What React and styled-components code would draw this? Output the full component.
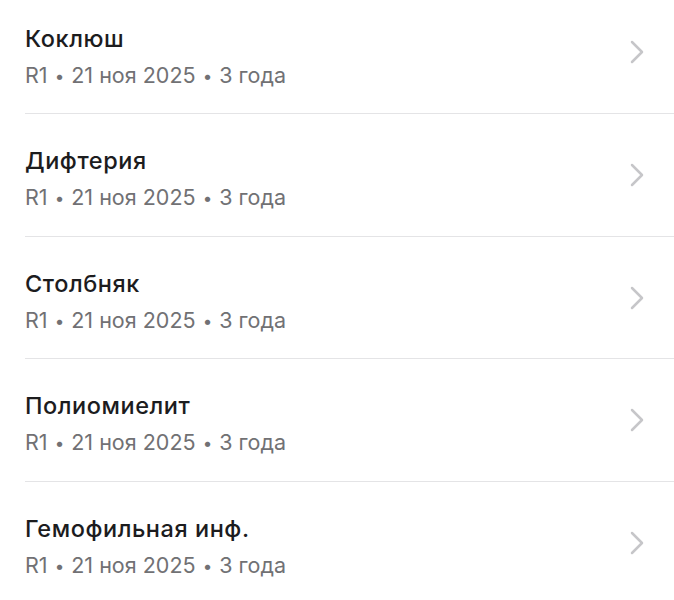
import styled, { createGlobalStyle } from "styled-components";

const GlobalStyle = createGlobalStyle`
  body {
    margin: 0;
    background: #ffffff;
    font-family: Inter, "Noto Sans", sans-serif;
    -webkit-font-smoothing: antialiased;
  }
`;

const vaccines = [
  { name: "Коклюш", round: "R1", date: "21 ноя 2025", age: "3 года" },
  { name: "Дифтерия", round: "R1", date: "21 ноя 2025", age: "3 года" },
  { name: "Столбняк", round: "R1", date: "21 ноя 2025", age: "3 года" },
  { name: "Полиомиелит", round: "R1", date: "21 ноя 2025", age: "3 года" },
  { name: "Гемофильная инф.", round: "R1", date: "21 ноя 2025", age: "3 года" },
];

const Chevron = () => (
  <svg width="16" height="26" viewBox="0 0 16 26" fill="none">
    <path
      d="M3 3 L13 13 L3 23"
      stroke="#c6c6c9"
      strokeWidth="2.5"
      strokeLinecap="round"
      strokeLinejoin="round"
    />
  </svg>
);

const App = () => {
  return (
    <>
      <GlobalStyle />
      <S.List>
        {vaccines.map((v, i) => (
          <S.Row key={i}>
            <S.Inner last={i === vaccines.length - 1}>
              <S.Texts>
                <S.Title>{v.name}</S.Title>
                <S.Meta>
                  {v.round} <S.Dot>•</S.Dot> {v.date} <S.Dot>•</S.Dot> {v.age}
                </S.Meta>
              </S.Texts>
              <Chevron />
            </S.Inner>
          </S.Row>
        ))}
      </S.List>
    </>
  );
};
export default App;

const List = styled.div`
  margin-top: -8.5px;
  background: #ffffff;
`;

const Row = styled.div`
  padding-left: 25px;
  cursor: pointer;
`;

const Inner = styled.div`
  display: flex;
  align-items: center;
  justify-content: space-between;
  padding-right: 29px;
  border-bottom: ${({ last }) => (last ? "none" : "1px solid #e4e4e6")};
`;

const Texts = styled.div`
  display: flex;
  flex-direction: column;
  padding: 33px 0 24.67px;
`;

const Title = styled.div`
  font-size: 23.5px;
  line-height: 28px;
  font-weight: 500;
  color: #1c1c1e;
  letter-spacing: 0.55px;
  margin-bottom: 9px;
`;

const Meta = styled.div`
  font-size: 21.5px;
  line-height: 27px;
  height: 27px;
  color: #717174;
  letter-spacing: 0;
`;

const Dot = styled.span`
  font-size: 17px;
  line-height: 0;
  vertical-align: 1px;
  margin: 0 1px;
`;

const S = {
  List,
  Row,
  Inner,
  Texts,
  Title,
  Meta,
  Dot,
};
